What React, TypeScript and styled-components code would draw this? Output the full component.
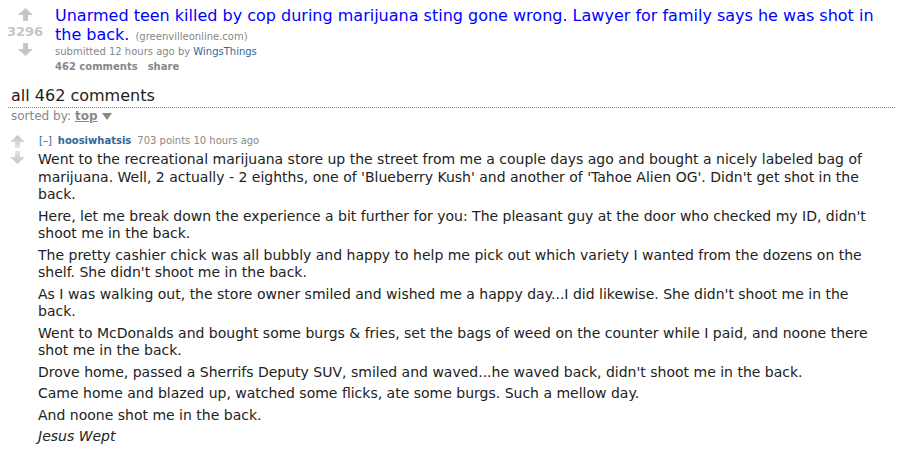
import React from "react";
import styled, { createGlobalStyle } from "styled-components";

const Global = createGlobalStyle`
  html, body { margin: 0; padding: 0; background: #fff; }
  body { font-family: Verdana, "DejaVu Sans", sans-serif; color: #222; }
  * { box-sizing: border-box; }
`;

const Page = styled.div`
  width: 901px;
  padding: 0 6px 0 8px;
`;

const Link = styled.div`
  display: flex;
  align-items: flex-start;
  padding-top: 6px;
`;

const MidCol = styled.div`
  width: 34px;
  padding-top: 2px;
  display: flex;
  flex-direction: column;
  align-items: center;
  flex-shrink: 0;
`;

const Score = styled.div`
  font-size: 13px;
  font-weight: bold;
  color: #c6c6c6;
  line-height: 15px;
  margin: 3px 0 4px;
`;

const Entry = styled.div`
  margin-left: 13px;
  flex: 1;
`;

const Title = styled.a`
  font-size: 16px;
  line-height: 18px;
  color: #0000ff;
  text-decoration: none;
`;

const Domain = styled.span`
  font-size: 10px;
  line-height: 12px;
  color: #888;
  margin-left: 6px;
`;

const Tagline = styled.div`
  font-size: 10px;
  color: #888;
  line-height: 13px;
  margin-top: 1px;
`;

const Author = styled.span<{ $bold?: boolean }>`
  color: #369;
  font-weight: ${(p) => (p.$bold ? "bold" : "normal")};
`;

const Buttons = styled.div`
  display: flex;
  gap: 10px;
  font-size: 10px;
  font-weight: bold;
  color: #888;
  line-height: 14px;
  margin-top: 2px;
`;

const Panestack = styled.div`
  margin-top: 12px;
`;

const CommentsTitle = styled.div`
  font-size: 16px;
  line-height: 19px;
  color: #222;
  border-bottom: 1px dotted #808080;
  padding-left: 3px;
  padding-bottom: 2px;
`;

const Menu = styled.div`
  font-size: 12px;
  color: #888;
  padding-left: 3px;
  line-height: 16px;
  display: flex;
  align-items: center;
  gap: 4px;
`;

const Selected = styled.span`
  font-weight: bold;
  text-decoration: underline;
  color: #888;
`;

const Comment = styled.div`
  display: flex;
  margin-top: 10px;
`;

const CommentVote = styled.div`
  width: 18px;
  padding-top: 1px;
  display: flex;
  flex-direction: column;
  align-items: center;
  gap: 3px;
  flex-shrink: 0;
`;

const CommentEntry = styled.div`
  margin-left: 12px;
  flex: 1;
`;

const CommentTagline = styled.div`
  font-size: 10px;
  color: #888;
  line-height: 14px;
  padding-left: 1px;
  display: flex;
  gap: 6px;
`;

const Expand = styled.span`
  color: #369;
`;

const Md = styled.div`
  max-width: 840px;
  font-size: 14px;
  line-height: 17.5px;
  color: #222;
  margin-top: 3px;
  p {
    margin: 0 0 4px;
  }
  em { font-style: italic; }
`;

const Arrow = ({ down, light }: { down?: boolean; light?: boolean }) => (
  <svg
    width="15"
    height="13"
    viewBox="0 0 15 13"
    style={{ display: "block", transform: down ? "rotate(180deg)" : undefined }}
  >
    <defs>
      <linearGradient id={light ? "ga" : "gb"} x1="0" y1="0" x2="0" y2="1">
        <stop offset="0" stopColor={light ? "#c4c4c4" : "#c6c6c6"} />
        <stop offset="1" stopColor={light ? "#e4e4e4" : "#c6c6c6"} />
      </linearGradient>
    </defs>
    <polygon
      points="7.5,0 15,7 10,7 10,13 5,13 5,7 0,7"
      fill={`url(#${light ? "ga" : "gb"})`}
    />
  </svg>
);

const Tri = () => (
  <svg width="10" height="7" viewBox="0 0 10 7" style={{ display: "block" }}>
    <polygon points="0,0 10,0 5,7" fill="#888" />
  </svg>
);

export default function App() {
  return (
    <Page>
      <Global />
      <Link>
        <MidCol>
          <Arrow />
          <Score>3296</Score>
          <Arrow down />
        </MidCol>
        <Entry>
          <Title href="#">
            Unarmed teen killed by cop during marijuana sting gone wrong. Lawyer for family says he was shot in the back.
          </Title>
          <Domain>(greenvilleonline.com)</Domain>
          <Tagline>
            submitted 12 hours ago by <Author>WingsThings</Author>
          </Tagline>
          <Buttons>
            <span>462 comments</span>
            <span>share</span>
          </Buttons>
        </Entry>
      </Link>
      <Panestack>
        <CommentsTitle>all 462 comments</CommentsTitle>
        <Menu>
          <span>sorted by:</span>
          <Selected>top</Selected>
          <Tri />
        </Menu>
        <Comment>
          <CommentVote>
            <Arrow light />
            <Arrow light down />
          </CommentVote>
          <CommentEntry>
            <CommentTagline>
              <Expand>[–]</Expand>
              <Author $bold>hoosiwhatsis</Author>
              <span>703 points 10 hours ago</span>
            </CommentTagline>
            <Md>
              <p>
                Went to the recreational marijuana store up the street from me a couple days ago and bought a nicely labeled bag of marijuana. Well, 2 actually - 2 eighths, one of 'Blueberry Kush' and another of 'Tahoe Alien OG'. Didn't get shot in the back.
              </p>
              <p>
                Here, let me break down the experience a bit further for you: The pleasant guy at the door who checked my ID, didn't shoot me in the back.
              </p>
              <p>
                The pretty cashier chick was all bubbly and happy to help me pick out which variety I wanted from the dozens on the shelf. She didn't shoot me in the back.
              </p>
              <p>
                As I was walking out, the store owner smiled and wished me a happy day...I did likewise. She didn't shoot me in the back.
              </p>
              <p>
                Went to McDonalds and bought some burgs &amp; fries, set the bags of weed on the counter while I paid, and noone there shot me in the back.
              </p>
              <p>Drove home, passed a Sherrifs Deputy SUV, smiled and waved...he waved back, didn't shoot me in the back.</p>
              <p>Came home and blazed up, watched some flicks, ate some burgs. Such a mellow day.</p>
              <p>And noone shot me in the back.</p>
              <p>
                <em>Jesus Wept</em>
              </p>
            </Md>
          </CommentEntry>
        </Comment>
      </Panestack>
    </Page>
  );
}
